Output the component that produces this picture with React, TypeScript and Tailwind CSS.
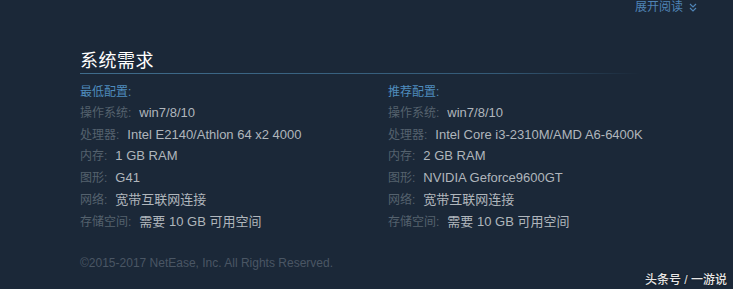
import React from "react";

const font = '"Liberation Sans", Arial, "Noto Sans CJK SC", sans-serif';

type Row = [string, string];

const minRows: Row[] = [
  ["操作系统:", "win7/8/10"],
  ["处理器:", "Intel E2140/Athlon 64 x2 4000"],
  ["内存:", "1 GB RAM"],
  ["图形:", "G41"],
  ["网络:", "宽带互联网连接"],
  ["存储空间:", "需要 10 GB 可用空间"],
];

const recRows: Row[] = [
  ["操作系统:", "win7/8/10"],
  ["处理器:", "Intel Core i3-2310M/AMD A6-6400K"],
  ["内存:", "2 GB RAM"],
  ["图形:", "NVIDIA Geforce9600GT"],
  ["网络:", "宽带互联网连接"],
  ["存储空间:", "需要 10 GB 可用空间"],
];

function Col({ title, rows }: { title: string; rows: Row[] }) {
  return (
    <div className="flex flex-col">
      <div className="h-[21px] flex items-center text-[12px] leading-[16px] text-[#4f8cbd]">{title}</div>
      {rows.map(([k, v], i) => (
        <div key={i} className="h-[21.8px] flex items-center whitespace-nowrap">
          <span className="text-[12px] leading-[16px] text-[#55626e]">{k}</span>
          <span className="ml-[8px] text-[13px] leading-[16px] text-[#b0b6bc]">{v}</span>
        </div>
      ))}
    </div>
  );
}

export default function App() {
  return (
    <div
      className="relative w-[733px] h-[289px] overflow-hidden bg-[#1b2838]"
      style={{ fontFamily: font }}
    >
      <div className="flex justify-end pr-[36px] h-[14px]">
        <span className="flex items-center gap-[6px] text-[12px] leading-[12px] text-[#4f84b6]">
          展开阅读
          <svg width="8" height="9" viewBox="0 0 8 9" fill="none" stroke="#4f84b6" strokeWidth="1.2">
            <path d="M1 1 L4 4 L7 1" />
            <path d="M1 5 L4 8 L7 5" />
          </svg>
        </span>
      </div>
      <div className="pl-[80px] pt-[35px]">
        <div className="w-[560px] h-[25px] bg-[linear-gradient(to_right,#3f6c8c_0%,#345a77_75%,rgba(27,40,56,0)_100%)] bg-no-repeat bg-bottom bg-[length:100%_1px]">
          <div className="text-[18px] leading-[24px] text-[#ffffff] tracking-[0.5px]">系统需求</div>
        </div>
        <div className="grid grid-cols-[308px_1fr] mt-[7px]">
          <Col title="最低配置:" rows={minRows} />
          <Col title="推荐配置:" rows={recRows} />
        </div>
        <div className="mt-[22px] h-[16px] flex items-center text-[12px] leading-[16px] text-[#4a5664]">
          ©2015-2017 NetEase, Inc. All Rights Reserved.
        </div>
      </div>
      <div className="absolute right-[6px] bottom-[1px] text-[12px] leading-[16px] text-[#e6e6e6] font-medium [text-shadow:0_0_2px_rgba(0,0,0,0.6)]">
        头条号 / 一游说
      </div>
    </div>
  );
}
